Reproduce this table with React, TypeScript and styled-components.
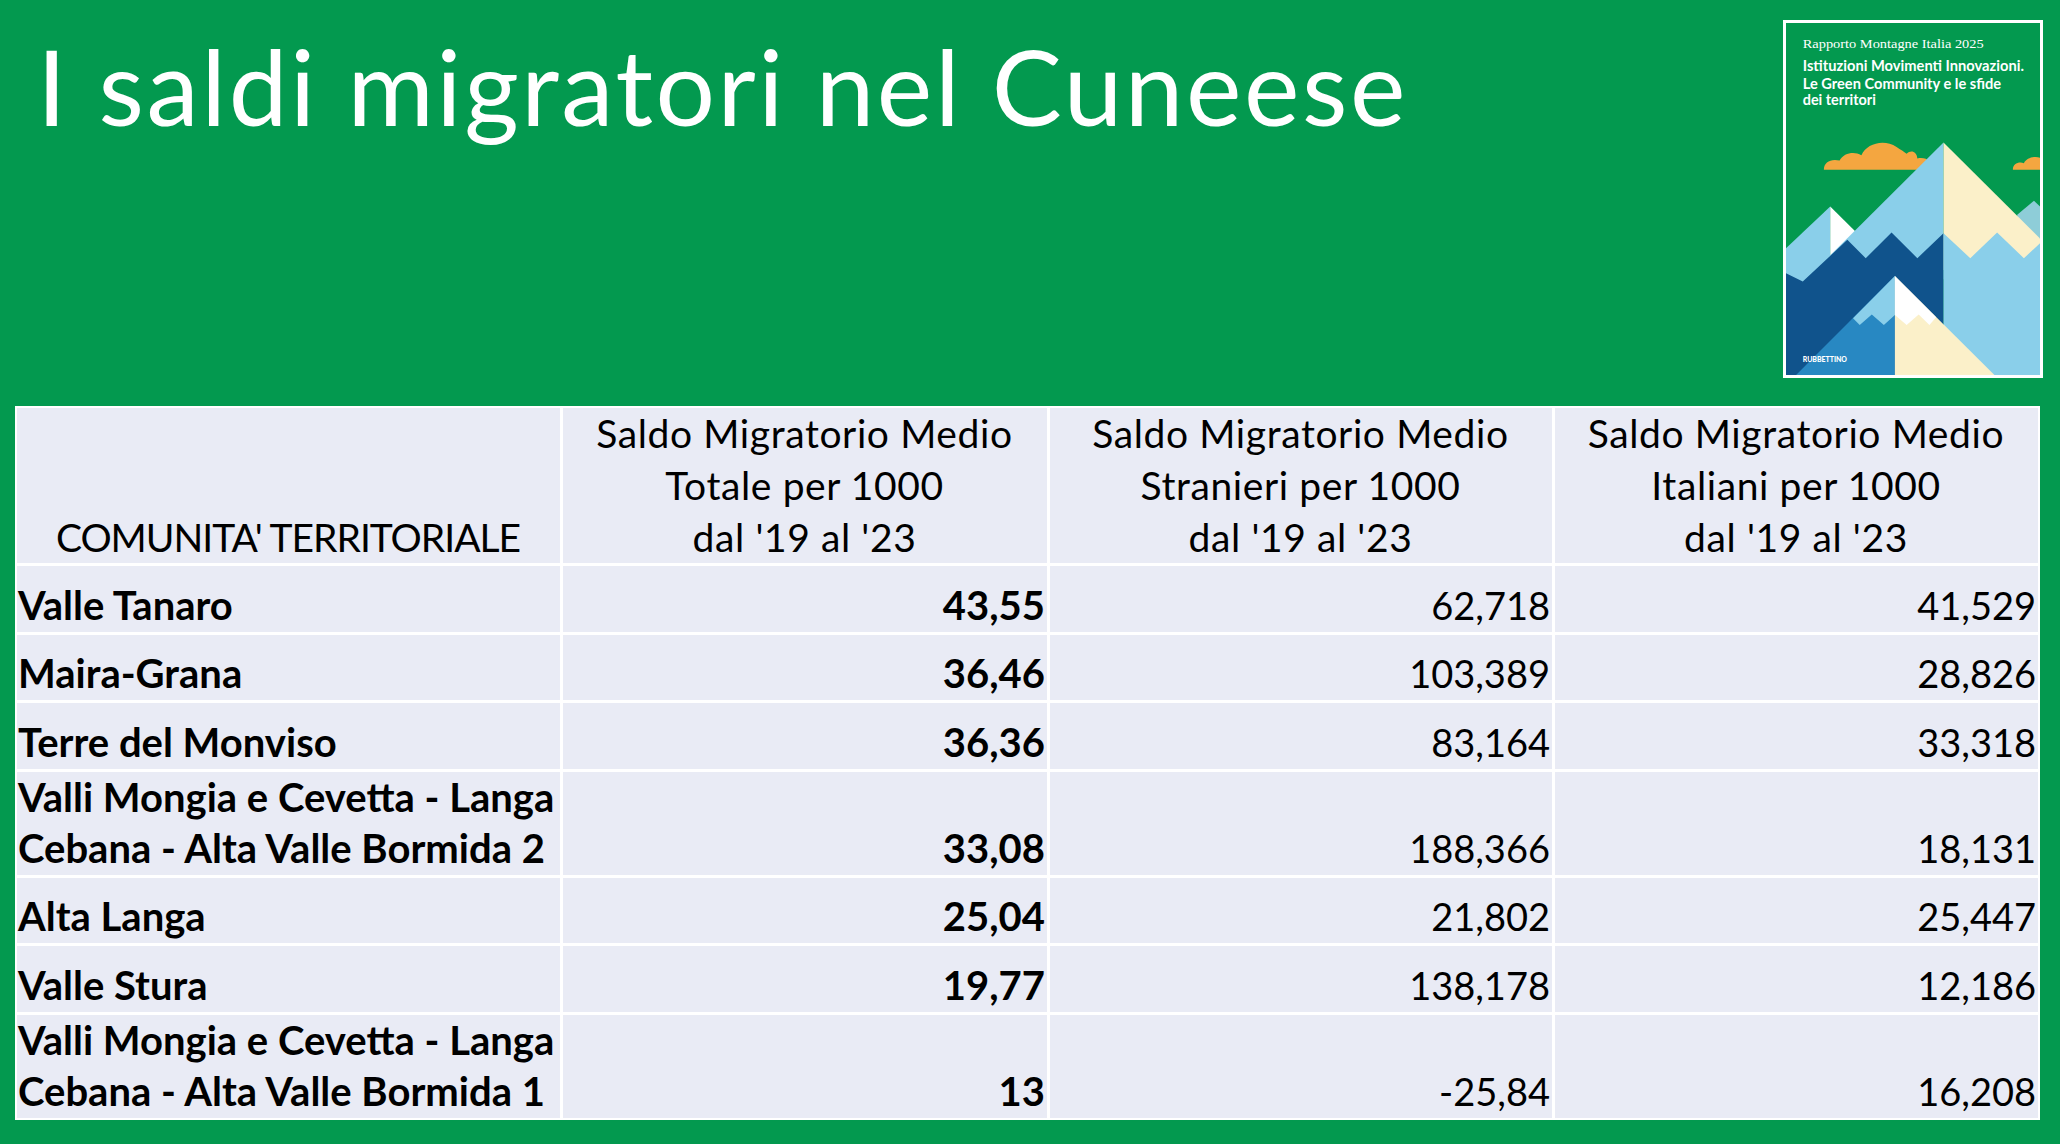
import React from 'react'
import styled, { createGlobalStyle } from 'styled-components'

const GREEN = '#03994f'
const CELL = '#e9ebf5'

const GlobalStyle = createGlobalStyle`
  html, body {
    margin: 0;
    padding: 0;
    background: ${GREEN};
  }
  body {
    font-family: 'Lato', 'Liberation Sans', sans-serif;
  }
`

interface Row {
  name: string[]
  total: string
  foreign: string
  italian: string
}

const rows: Row[] = [
  { name: ['Valle Tanaro'], total: '43,55', foreign: '62,718', italian: '41,529' },
  { name: ['Maira-Grana'], total: '36,46', foreign: '103,389', italian: '28,826' },
  { name: ['Terre del Monviso'], total: '36,36', foreign: '83,164', italian: '33,318' },
  {
    name: ['Valli Mongia e Cevetta - Langa', 'Cebana - Alta Valle Bormida 2'],
    total: '33,08',
    foreign: '188,366',
    italian: '18,131',
  },
  { name: ['Alta Langa'], total: '25,04', foreign: '21,802', italian: '25,447' },
  { name: ['Valle Stura'], total: '19,77', foreign: '138,178', italian: '12,186' },
  {
    name: ['Valli Mongia e Cevetta - Langa', 'Cebana - Alta Valle Bormida 1'],
    total: '13',
    foreign: '-25,84',
    italian: '16,208',
  },
]

const headers = [
  ['Saldo Migratorio Medio', 'Totale per 1000', "dal '19 al '23"],
  ['Saldo Migratorio Medio', 'Stranieri per 1000', "dal '19 al '23"],
  ['Saldo Migratorio Medio', 'Italiani per 1000', "dal '19 al '23"],
]

const BookCover: React.FC = () => (
  <Cover>
    <svg viewBox="80 40 758 1055" width="254" height="352" preserveAspectRatio="none">
      <rect x="80" y="40" width="758" height="1055" fill={GREEN} />
      <text x="130" y="115" fill="#fff" fontFamily="'Liberation Serif', serif" fontSize="36" textLength="540" lengthAdjust="spacingAndGlyphs">
        Rapporto Montagne Italia 2025
      </text>
      <g fill="#fff" fontFamily="'Lato', sans-serif" fontWeight="700" fontSize="44">
        <text x="130" y="183" textLength="660" lengthAdjust="spacingAndGlyphs">Istituzioni Movimenti Innovazioni.</text>
        <text x="130" y="237" textLength="592" lengthAdjust="spacingAndGlyphs">Le Green Community e le sfide</text>
        <text x="130" y="285" textLength="218" lengthAdjust="spacingAndGlyphs">dei territori</text>
      </g>
      {/* clouds */}
      <path
        fill="#f4a640"
        d="M193,480 C193,456 214,446 240,452 C252,430 282,424 305,436 C320,402 372,386 410,412 C422,420 432,426 440,432 C452,420 470,424 472,446 C498,440 518,456 518,480 Z"
      />
      <path fill="#f4a640" d="M757,480 C757,462 774,455 790,460 C798,443 824,438 838,444 L838,480 Z" />
      {/* far right peak */}
      <polygon fill="#8ecdd8" points="770,615 820,573 838,590 838,700 770,700" />
      {/* small left peak */}
      <polygon fill="#8acfea" points="80,715 212,590 212,1095 80,1095" />
      <polygon fill="#ffffff" points="212,590 300,678 212,766" />
      {/* big peak */}
      <polygon fill="#8acfea" points="550,398 140,808 550,808" />
      <polygon fill="#fbf0c9" points="550,398 838,686 838,780 550,780" />
      <polygon fill="#10538c" points="80,790 130,815 263,690 318,745 395,668 472,745 550,670 550,1095 80,1095" />
      <polygon fill="#8acfea" points="550,670 630,745 710,668 790,745 838,700 838,1095 550,1095" />
      {/* front peak */}
      <polygon fill="#2888c2" points="110,1095 405,798 405,1095" />
      <polygon fill="#8acfea" points="405,798 280,925 300,945 336,914 372,945 405,915" />
      <polygon fill="#fbf0c9" points="405,798 702,1095 405,1095" />
      <polygon fill="#ffffff" points="405,798 528,922 508,945 476,914 440,945 405,915" />
      <text x="130" y="1057" fill="#fff" fontFamily="'Lato', sans-serif" fontWeight="900" fontSize="20" textLength="132" lengthAdjust="spacingAndGlyphs">
        RUBBETTINO
      </text>
    </svg>
  </Cover>
)

const App: React.FC = () => (
  <Page>
    <GlobalStyle />
    <Header>
      <Title>I saldi migratori nel Cuneese</Title>
      <BookCover />
    </Header>
    <Table>
      <HeadCell caps>COMUNITA' TERRITORIALE</HeadCell>
      {headers.map((lines, i) => (
        <HeadCell key={i}>
          {lines.map((l, j) => (
            <span key={j}>{l}</span>
          ))}
        </HeadCell>
      ))}
      {rows.map((r, i) => (
        <React.Fragment key={i}>
          <NameCell>
            {r.name.map((l, j) => (
              <span key={j}>{l}</span>
            ))}
          </NameCell>
          <NumCell bold>{r.total}</NumCell>
          <NumCell>{r.foreign}</NumCell>
          <NumCell>{r.italian}</NumCell>
        </React.Fragment>
      ))}
    </Table>
  </Page>
)

const Page = styled.div`
  width: 2060px;
  min-height: 1144px;
  box-sizing: border-box;
  padding: 0 17px 0 15px;
  background: ${GREEN};
`

const Header = styled.div`
  display: flex;
  justify-content: space-between;
  align-items: flex-start;
  height: 406px;
`

const Title = styled.h1`
  margin: 33px 0 0 22px;
  font-family: 'Lato', sans-serif;
  font-weight: 400;
  font-size: 105px;
  letter-spacing: 2.6px;
  line-height: 1;
  color: #fff;
  white-space: nowrap;
`

const Cover = styled.div`
  margin-top: 20px;
  width: 254px;
  height: 352px;
  border: 3px solid #fff;
  display: flex;

  svg {
    display: block;
  }
`

const Table = styled.div`
  width: 2025px;
  box-sizing: border-box;
  display: grid;
  grid-template-columns: 543px 484px 502px 483px;
  gap: 3px;
  padding: 2px;
  background: #fff;
  font-family: 'Lato', 'Liberation Sans', sans-serif;
  color: #000;
`

const Cell = styled.div`
  background: ${CELL};
  display: flex;
  flex-direction: column;
  justify-content: flex-end;
  min-height: 65.5px;
  box-sizing: border-box;
  padding: 0 2px 1px 1px;
`

const HeadCell = styled(Cell)<{ caps?: boolean }>`
  align-items: center;
  text-align: center;
  font-size: 39px;
  letter-spacing: ${p => (p.caps ? -1 : 0.6)}px;
  line-height: 52px;
  padding-bottom: 0;
  height: 155px;
`

const NameCell = styled(Cell)`
  align-items: flex-start;
  font-size: 40px;
  font-weight: 700;
  line-height: 51px;
  white-space: nowrap;
`

const NumCell = styled(Cell)<{ bold?: boolean }>`
  align-items: flex-end;
  font-size: ${p => (p.bold ? 40 : 38)}px;
  font-weight: ${p => (p.bold ? 700 : 400)};
  line-height: 51px;
`

export default App
